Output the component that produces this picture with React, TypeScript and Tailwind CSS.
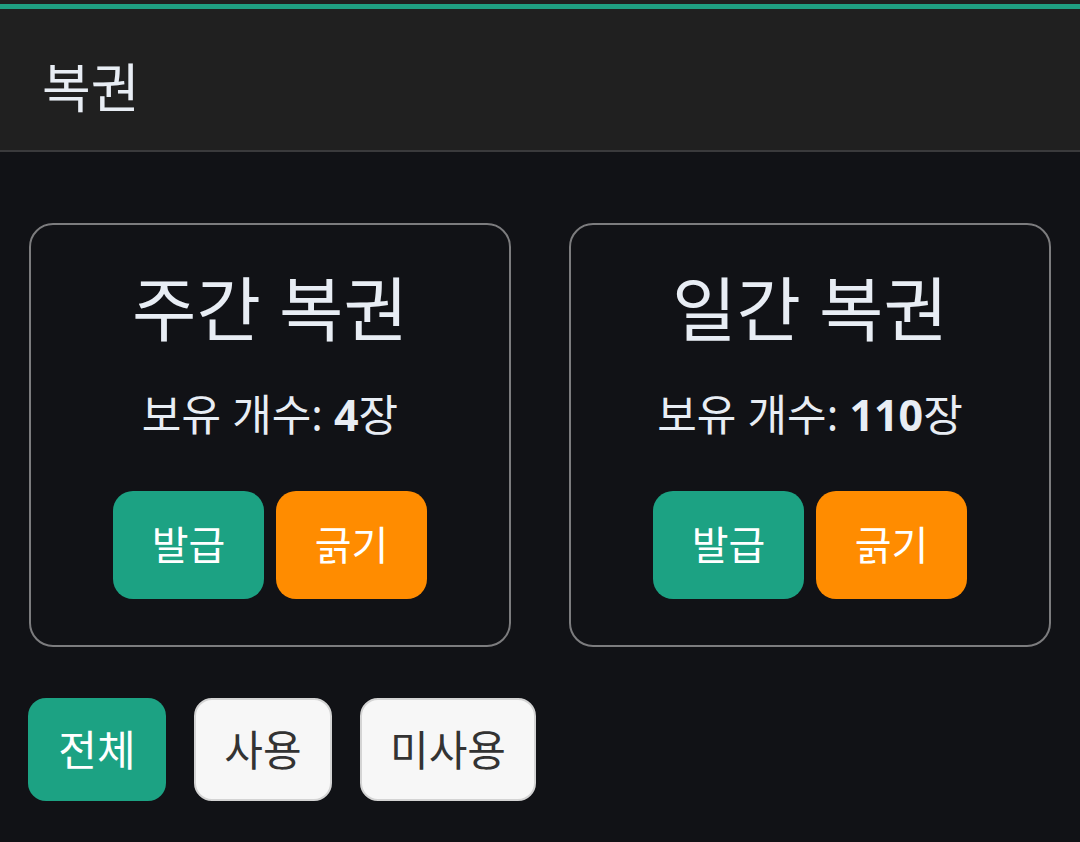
import React from "react";

const font = { fontFamily: '"Noto Sans", "Noto Sans CJK KR", sans-serif' };

function Card({ title, count }: { title: string; count: string }) {
  return (
    <div className="flex flex-col items-center rounded-[24px] border-2 border-[#7c7c7e] pt-[34px] pb-[46px]">
      <div className="text-[70px] leading-[100px] text-[#e8edf4]">{title}</div>
      <div className="mt-[28px] text-[43px] leading-[56px] text-[#e8edf4]">
        보유 개수: <b className="font-bold">{count}</b>장
      </div>
      <div className="mt-[48px] flex gap-[12px]">
        <button className="h-[108px] w-[151px] rounded-[20px] bg-[#1ca283] text-[40px] text-white">발급</button>
        <button className="h-[108px] w-[151px] rounded-[20px] bg-[#ff8c00] text-[40px] text-white">긁기</button>
      </div>
    </div>
  );
}

export default function App() {
  return (
    <div className="min-h-[842px] w-[1080px] bg-[#111216]" style={font}>
      <div className="h-[4px] bg-[#202020]" />
      <div className="h-[5px] bg-[#1f9f82]" />
      <div className="flex h-[143px] items-center border-b-2 border-[#3a3a3c] bg-[#202020] pl-[42px] pt-[16px]">
        <div className="text-[53px] leading-none text-[#e8edf4]">복권</div>
      </div>
      <div className="grid grid-cols-2 gap-[58px] px-[29px] pt-[71px]">
        <Card title="주간 복권" count="4" />
        <Card title="일간 복권" count="110" />
      </div>
      <div className="mt-[51px] flex gap-[28px] px-[28px]">
        <button className="h-[103px] w-[138px] rounded-[18px] bg-[#1ca283] text-[42px] text-white">전체</button>
        <button className="h-[103px] w-[138px] rounded-[18px] border-2 border-[#d4d4d4] bg-[#f7f7f7] text-[42px] text-[#333333]">사용</button>
        <button className="h-[103px] w-[176px] rounded-[18px] border-2 border-[#d4d4d4] bg-[#f7f7f7] text-[42px] text-[#333333]">미사용</button>
      </div>
    </div>
  );
}
